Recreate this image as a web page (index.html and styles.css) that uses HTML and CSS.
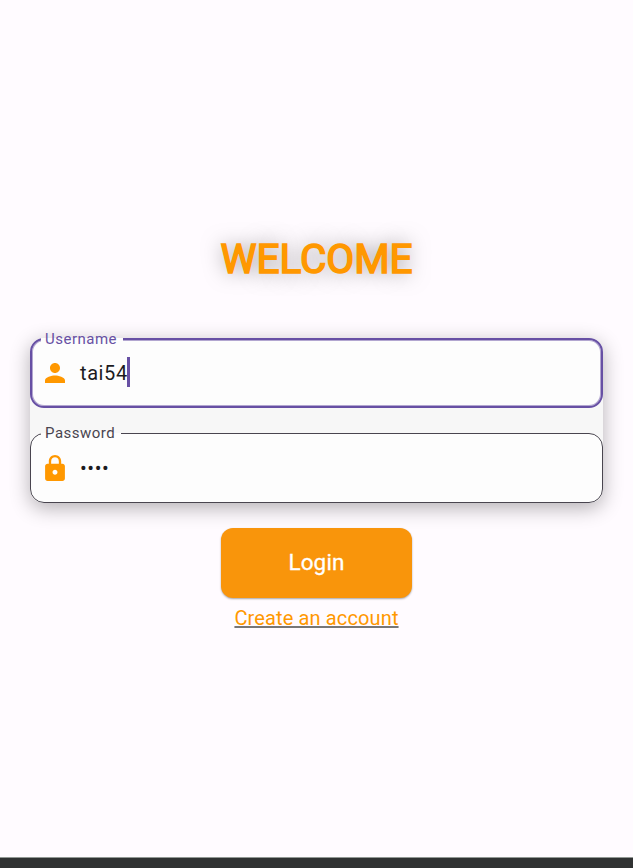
FILE: index.html
```html
<!DOCTYPE html>
<html lang="en">
<head>
<meta charset="utf-8">
<title>Login</title>
<link rel="stylesheet" href="styles.css">
</head>
<body>
<main class="screen">
  <h1 class="title"><span class="title-text">WELCOME</span></h1>
  <section class="form">
    <fieldset class="field focused">
      <legend class="label username-label"><span class="label-text">Username</span></legend>
      <div class="row">
        <svg class="icon" viewBox="4 4 16 16" width="20" height="20"><path d="M12 12c2.210 0 4-1.790 4-4s-1.790-4-4-4-4 1.790-4 4 1.790 4 4 4zm0 2c-2.670 0-8 1.340-8 4v2h16v-2c0-2.660-5.330-4-8-4z"/></svg>
        <span class="value">tai54</span><span class="caret"></span>
      </div>
    </fieldset>
    <fieldset class="field">
      <legend class="label password-label"><span class="label-text">Password</span></legend>
      <div class="row password-row">
        <svg class="icon" viewBox="4 1 16 21" width="20" height="26"><path d="M18 8h-1V6c0-2.760-2.240-5-5-5S7 3.240 7 6v2H6c-1.100 0-2 .9-2 2v10c0 1.100.9 2 2 2h12c1.100 0 2-.9 2-2V10c0-1.100-.9-2-2-2zm-6 9c-1.100 0-2-.9-2-2s.9-2 2-2 2 .9 2 2-.9 2-2 2zm3.100-9H8.900V6c0-1.710 1.390-3.100 3.100-3.100s3.100 1.390 3.100 3.100v2z"/></svg>
        <span class="value dots">••••</span>
      </div>
    </fieldset>
  </section>
  <button class="login"><span class="login-text">Login</span></button>
  <a class="create"><span class="create-text">Create an account</span></a>
</main>
<footer class="bar"></footer>
</body>
</html>
```
FILE: styles.css
```css
* { box-sizing: border-box; }
body {
  margin: 0;
  height: 868px;
  display: flex;
  flex-direction: column;
  overflow: hidden;
  background: #fffbff;
  font-family: Roboto, sans-serif;
}
.screen {
  flex: 1;
  display: flex;
  flex-direction: column;
  align-items: center;
  padding: 235px 30px 0;
}
.title {
  margin: 0 0 55px;
  height: 48px;
  line-height: 48px;
  font-size: 40.5px;
  font-weight: 400;
  color: #ff9800;
  -webkit-text-stroke: 1.6px #ff9800;
  text-shadow: 0 0 20px rgba(0, 0, 0, .5);
}
.form {
  width: 573px;
  height: 165px;
  display: flex;
  flex-direction: column;
  gap: 16px;
  border-radius: 14px;
  background: #f7f7f7;
  box-shadow: 0 5px 20px rgba(0, 0, 0, .3);
}
.field {
  flex: none;
  min-width: 0;
  height: 79px;
  margin: -8px 0 0;
  padding: 0 0 0 12px;
  border: 1px solid #49454f;
  border-radius: 14px;
  background: #fdfdfd;
}
.field + .field { margin-top: 0; }
.focused {
  height: 78px;
  border: 2px solid #6750a4;
  padding-left: 11px;
  box-shadow: inset 0 0 0 1px rgba(103, 80, 164, .5);
}
.label {
  height: 18px;
  padding: 0 0 0 4px;
  margin-left: -2px;
  line-height: 18px;
  font-size: 15px;
  letter-spacing: .5px;
  white-space: nowrap;
  color: #49454f;
}
.focused .label {
  color: #6750a4;
  background: linear-gradient(transparent 50%, #fdfdfd 50%);
}
.username-label { width: 82px; }
.password-label { width: 80px; }
.row {
  display: flex;
  align-items: center;
  height: 50px;
  padding-left: 2px;
}
.password-row { height: 51px; }
.icon { fill: #ff9800; margin-right: 15px; }
.value {
  font-size: 20px;
  line-height: 28px;
  letter-spacing: .6px;
  color: #1c1b1f;
}
.dots { padding-top: 1px; }
.caret {
  width: 3px;
  height: 30px;
  margin: -2px 0 0 -.4px;
  background: #6750a4;
}
.login {
  width: 191px;
  height: 70px;
  margin: 25px 0 0;
  padding: 0 0 2px;
  border: 0;
  border-radius: 12px;
  background: #f9950b;
  box-shadow: 0 1px 2px rgba(0, 0, 0, .35);
  font: 400 22.500px/68px Roboto, sans-serif;
  letter-spacing: .15px;
  -webkit-text-stroke: .3px #fff;
  color: #fff;
}
.create {
  height: 28px;
  margin-top: 6px;
  font-size: 20px;
  line-height: 28px;
  letter-spacing: .13px;
  color: #ff9800;
  text-decoration: underline;
  text-decoration-color: #777;
  text-decoration-skip-ink: none;
}
.bar {
  height: 11px;
  border-top: 1px solid #929894;
  background: #303232;
}
```
